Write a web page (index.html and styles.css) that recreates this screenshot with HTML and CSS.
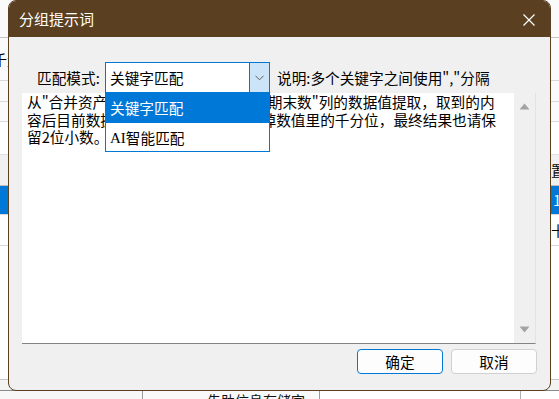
FILE: index.html
```html
<!DOCTYPE html>
<html lang="zh">
<head>
<meta charset="utf-8">
<link rel="stylesheet" href="styles.css">
</head>
<body>
<div class="app">
  <div class="app-row r1"></div>
  <div class="app-row r2"><span class="cell-l">千量</span></div>
  <div class="app-row r3"></div>
  <div class="app-row r4"></div>
  <div class="app-row r5"></div>
  <div class="app-row r6"><span class="cell-r">置</span></div>
  <div class="app-row r7 sel"><span class="cell-r">1,</span></div>
  <div class="app-row r8"><span class="cell-r">十</span></div>
  <div class="app-row r9"></div>
  <div class="app-row r10"></div>
  <div class="app-row r11">
    <div class="bcell c1"></div>
    <div class="bcell c2"><span class="btext">先助信息存储字</span></div>
    <div class="bcell c3"></div>
  </div>
</div>

<div class="dialog">
  <div class="titlebar">
    <span class="title">分组提示词</span>
    <svg class="close" width="12" height="12" viewBox="0 0 12 12"><path d="M0.5 0.5 L11.5 11.5 M11.5 0.5 L0.5 11.5" stroke="#fff" stroke-width="1.2" fill="none"/></svg>
  </div>
  <div class="content">
    <div class="mode-row">
      <span class="label">匹配模式:</span>
      <div class="combo">
        <span class="combo-text">关键字匹配</span>
        <span class="combo-btn"><svg width="9" height="6" viewBox="0 0 9 6"><path d="M0.5 0.8 L4.5 4.8 L8.5 0.8" stroke="#5a5a5a" stroke-width="1" fill="none"/></svg></span>
      </div>
      <span class="hint">说明:多个关键字之间使用","分隔</span>
    </div>
    <div class="editor">
      <div class="editor-text">从"合并资产负债表"中每一个项目的"期末数"列的数据值提取，取到的内<br>容后目前数据格式不太统一，请去除掉数值里的千分位，最终结果也请保<br>留2位小数。</div>
      <div class="scrollbar">
        <svg width="11" height="7" viewBox="0 0 11 7"><path d="M5.5 0.5 L10.5 6.5 L0.5 6.5 Z" fill="#a3a3a3"/></svg>
        <svg width="11" height="7" viewBox="0 0 11 7"><path d="M0.5 0.5 L10.5 0.5 L5.5 6.5 Z" fill="#a3a3a3"/></svg>
      </div>
    </div>
    <div class="buttons">
      <button class="btn primary">确定</button>
      <button class="btn">取消</button>
    </div>
    <div class="dropdown">
      <div class="opt active">关键字匹配</div>
      <div class="opt"><span class="ai">AI</span>智能匹配</div>
    </div>
  </div>
</div>
</body>
</html>
```

FILE: styles.css
```css
* { box-sizing: border-box; margin: 0; padding: 0; }
html, body { width: 559px; height: 399px; overflow: hidden; }
body {
  position: relative;
  background: #ffffff;
  font-family: "Noto Sans CJK SC", "Noto Sans", sans-serif;
  font-size: 14.67px;
  color: #000;
}

/* background application */
.app { display: flex; flex-direction: column; width: 559px; }
.app-row { position: relative; display: flex; justify-content: space-between; align-items: center; border-bottom: 1px solid #d9d9d9; background: #fafafa; overflow: hidden; }
.r1 { height: 38px; border-bottom-color: #c4c4c4; }
.r2 { height: 43px; }
.r3 { height: 21px; }
.r4 { height: 20px; }
.r5 { height: 33px; background: #fff; border-bottom-color: #e0e0e0; }
.r6 { height: 31px; background: #f0f0f0; border-bottom-color: #bdbdbd; }
.r7 { height: 29px; background: #0078d7; color: #fff; }
.r8 { height: 31px; background: #fff; }
.r9 { height: 134px; background: #fff; border-bottom-color: #c8c8c8; }
.r10 { height: 11px; background: #f3f3f3; border-bottom-color: #8a8a8a; }
.r11 { height: 8px; border-bottom: none; background: #fff; justify-content: flex-start; align-items: stretch; overflow: visible; }
.cell-l { margin-left: -7px; font-size: 14px; line-height: 16px; }
.cell-r { margin-left: auto; margin-right: -6px; font-size: 14px; line-height: 16px; }
.bcell { height: 8px; overflow: hidden; }
.c1 { width: 142px; background: #f7f7f7; }
.c2 { width: 178px; border-left: 1px solid #9a9a9a; border-right: 1px solid #9a9a9a; background: #f9f9f9; padding-left: 64px; }
.c3 { width: 201px; border-right: 1px solid #b0b0b0; background: #fff; }
.btext { display: block; font-size: 14px; line-height: 14px; margin-top: 2px; color: #111; white-space: nowrap; }

/* dialog window */
.dialog {
  position: absolute;
  left: 8px;
  top: 0;
  width: 543px;
  height: 391px;
  border: 1px solid #5a4020;
  border-radius: 8px;
  background: #f0f0f0;
  overflow: hidden;
  display: flex;
  flex-direction: column;
}
.titlebar {
  height: 36px;
  flex: none;
  background: #5a4020;
  display: flex;
  align-items: center;
  justify-content: space-between;
  padding: 0 15px 0 10px;
}
.title { color: #fff; font-size: 15px; line-height: 20px; margin-top: -1px; letter-spacing: 0; }
.close { display: block; margin-top: 1px; }

.content { position: relative; flex: 1; display: flex; flex-direction: column; padding-top: 25px; }
.mode-row { display: flex; align-items: center; height: 31px; padding-left: 28px; }
.label { width: 68px; line-height: 20px; }
.combo {
  width: 165px;
  height: 31px;
  border: 1px solid #0078d7;
  background: #fff;
  display: flex;
  align-items: center;
}
.combo-text { flex: 1; padding-left: 4px; line-height: 20px; }
.combo-btn {
  width: 20px;
  height: 29px;
  border-left: 1px solid #0078d7;
  background: #cce4f7;
  display: flex;
  align-items: center;
  justify-content: center;
}
.combo-btn svg { display: block; margin-top: 1px; }
.hint { margin-left: 7px; line-height: 20px; white-space: nowrap; }

.editor {
  margin-left: 13px;
  width: 514px;
  height: 251px;
  background: #fff;
  border-right: 1px solid #e3e3e3;
  border-bottom: 1px solid #838383;
  display: flex;
}
.editor-text { flex: 1; padding: 0 0 0 5px; line-height: 17.5px; white-space: nowrap; overflow: hidden; }
.scrollbar {
  width: 21px;
  background: #f0f0f0;
  display: flex;
  flex-direction: column;
  justify-content: space-between;
  align-items: center;
  padding: 10px 0 10px 0;
}
.scrollbar svg { display: block; }

.buttons { display: flex; justify-content: flex-end; gap: 8px; padding-right: 13px; margin-top: 5px; }
.btn {
  width: 86px;
  height: 25px;
  border: 1px solid #d0d0d0;
  border-radius: 4px;
  background: #fdfdfd;
  font-family: "Noto Sans CJK SC", "Noto Sans", sans-serif;
  font-size: 14.67px;
  line-height: 20px;
  color: #000;
}
.btn.primary { border: 1.5px solid #0078d7; }

.dropdown {
  position: absolute;
  left: 96px;
  top: 56px;
  width: 165px;
  height: 59px;
  border: 1px solid #0078d7;
  border-top: none;
  background: #fff;
}
.opt { height: 29px; padding-left: 4px; display: flex; align-items: center; line-height: 20px; }
.opt.active { height: 30px; background: #0078d7; color: #fff; }
.ai { font-family: "Liberation Serif", serif; font-size: 15px; }
```
